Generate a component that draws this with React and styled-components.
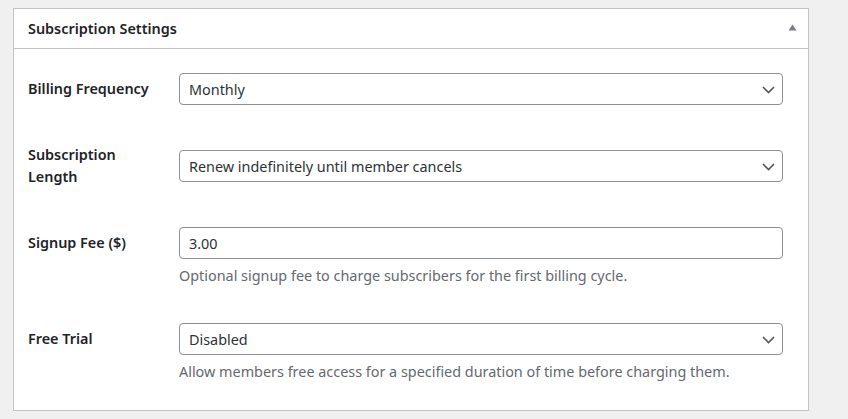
import React from 'react';
import styled, { createGlobalStyle } from 'styled-components';

const GlobalStyle = createGlobalStyle`
  html, body {
    margin: 0;
    padding: 0;
    background: #f0f0f1;
  }
  body {
    font-family: "Noto Sans", "Open Sans", sans-serif;
    font-size: 14.4px;
    color: #1d2327;
  }
`;

const Page = styled.div`
  padding: 8px 39px 8px 13px;
  width: 848px;
  box-sizing: border-box;
`;

const Panel = styled.div`
  background: #fff;
  border: 1px solid #c3c4c7;
`;

const PanelHeader = styled.div`
  display: flex;
  align-items: center;
  justify-content: space-between;
  height: 39px;
  padding: 0 8px 0 14px;
  border-bottom: 1px solid #c3c4c7;
`;

const PanelTitle = styled.h2`
  margin: 0;
  font-size: 14.4px;
  font-weight: 600;
  color: #1d2327;
`;

const ToggleButton = styled.button`
  display: flex;
  align-items: center;
  justify-content: center;
  width: 16px;
  height: 16px;
  padding: 0;
  margin-top: -2px;
  border: none;
  background: none;
  cursor: pointer;
`;

const PanelBody = styled.div`
  display: flex;
  flex-direction: column;
  gap: 39px;
  padding: 24px 25px 30px 14px;
`;

const Row = styled.div`
  display: grid;
  grid-template-columns: 151px 1fr;
  align-items: center;
`;

const Label = styled.label`
  grid-column: 1;
  grid-row: 1;
  font-weight: 600;
  line-height: 22px;
  color: #1d2327;
  padding-right: 20px;
`;

const Field = styled.div`
  grid-column: 2;
  grid-row: 1;
  position: relative;
  height: 32px;
`;

const Select = styled.select`
  appearance: none;
  display: block;
  width: 100%;
  height: 32px;
  box-sizing: border-box;
  padding: 0 28px 0 9px;
  border: 1px solid #8c8f94;
  border-radius: 4px;
  background: #fff;
  font-family: inherit;
  font-size: 14.4px;
  color: #2c3338;
  outline: none;
`;

const Input = styled.input`
  display: block;
  width: 100%;
  height: 32px;
  box-sizing: border-box;
  padding: 0 9px;
  border: 1px solid #8c8f94;
  border-radius: 4px;
  background: #fff;
  font-family: inherit;
  font-size: 14.4px;
  color: #2c3338;
  outline: none;
`;

const Chevron = styled.svg`
  position: absolute;
  right: 8px;
  top: 13px;
  pointer-events: none;
`;

const Description = styled.p`
  grid-column: 2;
  grid-row: 2;
  margin: 9px 0 0;
  line-height: 16px;
  color: #646970;
`;

const SelectField = ({ id, value, options }) => (
  <Field>
    <Select id={id} defaultValue={value}>
      {options.map((o) => (
        <option key={o}>{o}</option>
      ))}
    </Select>
    <Chevron width="13" height="8" viewBox="0 0 13 8">
      <polyline points="1,1 6.5,6.5 12,1" fill="none" stroke="#50575e" strokeWidth="1.6" />
    </Chevron>
  </Field>
);

const App = () => (
  <>
    <GlobalStyle />
    <Page>
      <Panel>
        <PanelHeader>
          <PanelTitle>Subscription Settings</PanelTitle>
          <ToggleButton aria-label="Toggle panel">
            <svg width="9" height="7" viewBox="0 0 9 7">
              <polygon points="4.5,0.5 8.5,6.5 0.5,6.5" fill="#787c82" />
            </svg>
          </ToggleButton>
        </PanelHeader>
        <PanelBody>
          <Row>
            <Label htmlFor="billing-frequency">Billing Frequency</Label>
            <SelectField
              id="billing-frequency"
              value="Monthly"
              options={['Daily', 'Weekly', 'Monthly', 'Yearly']}
            />
          </Row>
          <Row>
            <Label htmlFor="subscription-length">Subscription Length</Label>
            <SelectField
              id="subscription-length"
              value="Renew indefinitely until member cancels"
              options={['Renew indefinitely until member cancels', 'Fixed number of billing cycles']}
            />
          </Row>
          <Row>
            <Label htmlFor="signup-fee">Signup Fee ($)</Label>
            <Field>
              <Input id="signup-fee" type="text" defaultValue="3.00" />
            </Field>
            <Description>Optional signup fee to charge subscribers for the first billing cycle.</Description>
          </Row>
          <Row>
            <Label htmlFor="free-trial">Free Trial</Label>
            <SelectField
              id="free-trial"
              value="Disabled"
              options={['Disabled', 'Enabled']}
            />
            <Description>Allow members free access for a specified duration of time before charging them.</Description>
          </Row>
        </PanelBody>
      </Panel>
    </Page>
  </>
);

export default App;
